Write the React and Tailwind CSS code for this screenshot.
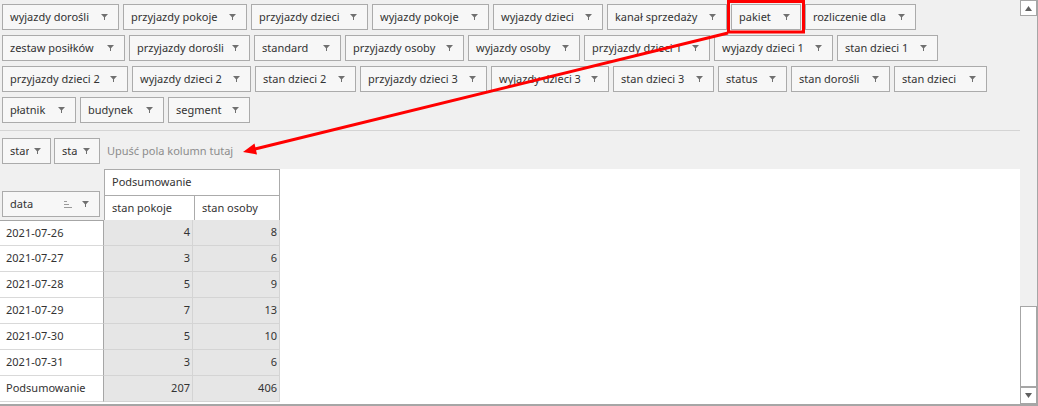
const font = { fontFamily: '"Noto Sans", "Liberation Sans", sans-serif' };

const rows1 = [
  ["wyjazdy dorośli", "w-[117px]"],
  ["przyjazdy pokoje", "w-[124px]"],
  ["przyjazdy dzieci", "w-[117px]"],
  ["wyjazdy pokoje", "w-[117px]"],
  ["wyjazdy dzieci", "w-[110px]"],
  ["kanał sprzedaży", "w-[120px]"],
  ["pakiet", "w-[70px]"],
  ["rozliczenie dla", "w-[111px]"],
  ["zestaw posiłków", "w-[123px]"],
  ["przyjazdy dorośli", "w-[121px]"],
  ["standard", "w-[87px]"],
  ["przyjazdy osoby", "w-[119px]"],
  ["wyjazdy osoby", "w-[112px]"],
  ["przyjazdy dzieci 1", "w-[126px]"],
  ["wyjazdy dzieci 1", "w-[119px]"],
  ["stan dzieci 1", "w-[101px]"],
  ["przyjazdy dzieci 2", "w-[126px]"],
  ["wyjazdy dzieci 2", "w-[119px]"],
  ["stan dzieci 2", "w-[101px]"],
  ["przyjazdy dzieci 3", "w-[127px]"],
  ["wyjazdy dzieci 3", "w-[118px]"],
  ["stan dzieci 3", "w-[101px]"],
  ["status", "w-[69px]"],
  ["stan dorośli", "w-[99px]"],
  ["stan dzieci", "w-[93px]"],
  ["płatnik", "w-[74px]"],
  ["budynek", "w-[84px]"],
  ["segment", "w-[82px]"],
];

const data = [
  ["2021-07-26", 4, 8],
  ["2021-07-27", 3, 6],
  ["2021-07-28", 5, 9],
  ["2021-07-29", 7, 13],
  ["2021-07-30", 5, 10],
  ["2021-07-31", 3, 6],
];

function FilterIcon() {
  return (
    <svg width="7" height="6" viewBox="0 0 7 6" className="shrink-0">
      <path d="M0 0H7L4 3.2V6H3V3.2Z" fill="#707070" />
    </svg>
  );
}

function SortIcon() {
  return (
    <svg width="8" height="7" viewBox="0 0 8 7" className="shrink-0">
      <rect x="0" y="0" width="3" height="1" fill="#9a9a9a" />
      <rect x="0" y="3" width="5" height="1" fill="#9a9a9a" />
      <rect x="0" y="6" width="8" height="1" fill="#9a9a9a" />
    </svg>
  );
}

function FieldButton({ label, w }) {
  return (
    <div
      className={`flex h-[26px] ${w} items-center justify-between border border-[#ababab] bg-[#f7f7f7] pl-[7px] pr-[10px] text-[11px] text-[#333]`}
    >
      <span className="whitespace-nowrap">{label}</span>
      <FilterIcon />
    </div>
  );
}

function ClippedButton({ label, w, tw }) {
  return (
    <div
      className={`flex h-[26px] ${w} items-center justify-between border border-[#ababab] bg-[#f7f7f7] pl-[7px] pr-[9px] text-[11px] text-[#333]`}
    >
      <span className={`${tw} shrink-0 overflow-hidden whitespace-nowrap`}>{label}</span>
      <FilterIcon />
    </div>
  );
}

export default function App() {
  return (
    <div className="relative flex h-[406px] w-[1038px] border-b-2 border-r border-[#a6a6a6] bg-[#f0f0f0]" style={font}>
      <div className="flex w-[1020px] flex-col">
        <div className="flex h-[130px] flex-wrap content-start gap-x-[4px] gap-y-[5px] pl-[2px] pt-[4px]">
          {rows1.map(([label, w]) => (
            <FieldButton key={label} label={label} w={w} />
          ))}
        </div>
        <div className="h-px bg-[#d4d4d4]" />
        <div className="flex h-[38px] items-start gap-[3px] pl-[2px] pt-[7px]">
          <ClippedButton label="stan pokoje" w="w-[49px]" tw="w-[19px]" />
          <ClippedButton label="stan osoby" w="w-[46px]" tw="w-[15px]" />
          <span className="ml-[4px] mt-[5px] text-[11px] text-[#8c8c8c]">Upuść pola kolumn tutaj</span>
        </div>
        <div className="flex flex-1 flex-col bg-white text-[11px] text-[#333]">
          <div className="flex">
            <div className="flex h-[51px] w-[104px] items-end bg-[#f0f0f0] pb-[3px] pl-[2px]">
              <div className="flex h-[26px] w-[98px] items-center border border-[#ababab] bg-[#f7f7f7] pl-[7px] pr-[10px]">
                <span className="flex-1">data</span>
                <SortIcon />
                <span className="w-[10px]" />
                <FilterIcon />
              </div>
            </div>
            <div className="flex w-[176px] flex-col">
              <div className="flex h-[26px] items-center border-x border-t border-[#ababab] pl-[7px]">Podsumowanie</div>
              <div className="flex h-[25px]">
                <div className="flex w-[90px] items-center border-l border-t border-[#ababab] pl-[7px]">stan pokoje</div>
                <div className="flex flex-1 items-center border-x border-t border-[#ababab] pl-[7px]">stan osoby</div>
              </div>
            </div>
          </div>
          {[...data, ["Podsumowanie", 207, 406]].map(([d, a, b], i) => (
            <div key={d} className="flex h-[26px]">
              <div
                className={`flex w-[104px] items-center border-r border-[#a6a6a6] pl-[6px] ${i === 0 ? "border-t" : "border-t-0"} border-b border-b-[#d9d9d9]`}
              >
                {d}
              </div>
              <div className="flex w-[89px] items-center justify-end border-b border-r border-[#d4d4d4] bg-[#e6e6e6] pr-[2px]">{a}</div>
              <div className="flex w-[87px] items-center justify-end border-b border-r border-[#d4d4d4] bg-[#e6e6e6] pr-[2px]">{b}</div>
            </div>
          ))}
        </div>
      </div>
      <div className="flex w-[17px] flex-col">
        <div className="flex h-[16px] items-center justify-center border border-[#a6a6a6] bg-white">
          <svg width="7" height="5" viewBox="0 0 7 5"><path d="M3.5 0L7 5H0Z" fill="#606060" /></svg>
        </div>
        <div className="flex-1" />
        <div className="h-[81px] border border-[#a6a6a6] bg-white" />
        <div className="flex h-[17px] items-center justify-center border border-[#a6a6a6] bg-white">
          <svg width="7" height="5" viewBox="0 0 7 5"><path d="M0 0H7L3.5 5Z" fill="#606060" /></svg>
        </div>
      </div>
      <svg className="pointer-events-none absolute left-0 top-0" width="1038" height="406">
        <rect x="728.5" y="1.5" width="75" height="30.5" fill="none" stroke="#ff0000" strokeWidth="3" />
        <line x1="728" y1="33" x2="255" y2="149" stroke="#ff0000" strokeWidth="3" />
        <polygon points="243,152 257,154.5 254.5,143.5" fill="#ff0000" />
      </svg>
    </div>
  );
}
